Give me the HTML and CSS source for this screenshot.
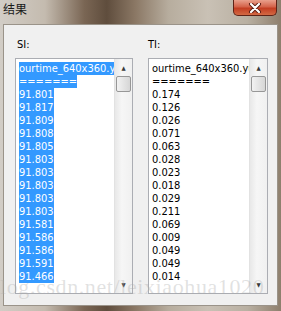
FILE: index.html
```html
<!DOCTYPE html>
<html lang="zh-CN">
<head>
    <meta charset="UTF-8">
    <title>结果</title>
    <link rel="stylesheet" href="styles.css">
</head>
<body>
    <div class="window">
        <div class="titlebar">
            <span class="title">结果</span>
            <button class="close-btn">
                <svg width="14" height="10" viewBox="0 0 14 10">
                    <path d="M3 1 L11 9 M11 1 L3 9" stroke="#5a1a10" stroke-width="4" stroke-linecap="round"/>
                    <path d="M3 1 L11 9 M11 1 L3 9" stroke="#ffffff" stroke-width="2.2" stroke-linecap="round"/>
                </svg>
            </button>
        </div>

        <div class="client">
            <div class="column">
                <div class="label">SI:</div>
                <div class="listbox">
                    <div class="lines selected">
                        <div class="line"><span>ourtime_640x360.yuv</span></div>
                        <div class="line"><span>=======</span></div>
                        <div class="line"><span>91.801</span></div>
                        <div class="line"><span>91.817</span></div>
                        <div class="line"><span>91.809</span></div>
                        <div class="line"><span>91.808</span></div>
                        <div class="line"><span>91.805</span></div>
                        <div class="line"><span>91.803</span></div>
                        <div class="line"><span>91.803</span></div>
                        <div class="line"><span>91.803</span></div>
                        <div class="line"><span>91.803</span></div>
                        <div class="line"><span>91.803</span></div>
                        <div class="line"><span>91.581</span></div>
                        <div class="line"><span>91.586</span></div>
                        <div class="line"><span>91.586</span></div>
                        <div class="line"><span>91.591</span></div>
                        <div class="line"><span>91.466</span></div>
                    </div>
                    <div class="scrollbar">
                        <div class="arrow">▲</div>
                        <div class="thumb"></div>
                        <div class="track"></div>
                        <div class="arrow">▼</div>
                    </div>
                </div>
            </div>

            <div class="column">
                <div class="label">TI:</div>
                <div class="listbox">
                    <div class="lines">
                        <div class="line"><span>ourtime_640x360.yuv</span></div>
                        <div class="line"><span>=======</span></div>
                        <div class="line"><span>0.174</span></div>
                        <div class="line"><span>0.126</span></div>
                        <div class="line"><span>0.026</span></div>
                        <div class="line"><span>0.071</span></div>
                        <div class="line"><span>0.063</span></div>
                        <div class="line"><span>0.028</span></div>
                        <div class="line"><span>0.023</span></div>
                        <div class="line"><span>0.018</span></div>
                        <div class="line"><span>0.029</span></div>
                        <div class="line"><span>0.211</span></div>
                        <div class="line"><span>0.069</span></div>
                        <div class="line"><span>0.009</span></div>
                        <div class="line"><span>0.049</span></div>
                        <div class="line"><span>0.049</span></div>
                        <div class="line"><span>0.014</span></div>
                    </div>
                    <div class="scrollbar">
                        <div class="arrow">▲</div>
                        <div class="thumb"></div>
                        <div class="track"></div>
                        <div class="arrow">▼</div>
                    </div>
                </div>
            </div>
        </div>

        <div class="watermark">log.csdn.net/leixiaohua1020</div>
    </div>
</body>
</html>
```

FILE: styles.css
```css
body {
    margin: 0;
    padding: 0;
    width: 281px;
    height: 311px;
    overflow: hidden;
    font-family: 'DejaVu Sans Condensed', 'DejaVu Sans', 'Noto Sans CJK SC', sans-serif;
    font-size: 11px;
    color: #000;
}

.window {
    position: relative;
    width: 281px;
    height: 311px;
    box-sizing: border-box;
    padding: 0 3px 5px 3px;
    display: flex;
    flex-direction: column;
    background: linear-gradient(90deg, #d2cdc6 0%, #c4bbaf 16%, #7a6654 30%, #5f4d3d 38%, #8a7764 48%, #b7ad9e 60%, #c9c1b5 74%, #b9b0a2 88%, #8e7f6d 100%);
}

.titlebar {
    height: 24px;
    flex-shrink: 0;
    display: flex;
    justify-content: space-between;
    align-items: flex-start;
}

.title {
    font-family: 'Noto Sans CJK SC', sans-serif;
    font-size: 12px;
    line-height: 16px;
    margin-top: 1px;
    color: #1a1a1a;
}

.close-btn {
    width: 44px;
    height: 16px;
    margin-right: 1px;
    padding: 0;
    border: 1px solid #5e2317;
    border-top: none;
    border-radius: 0 0 5px 5px;
    background: linear-gradient(#e9a08c 0%, #d4634a 45%, #c33e22 55%, #d36a44 100%);
    display: flex;
    align-items: center;
    justify-content: center;
}

.client {
    flex: 1;
    background: #f0f0f0;
    border: 1px solid #9a9389;
    display: flex;
    gap: 15px;
    padding: 13px 0 0 11px;
}

.column {
    display: flex;
    flex-direction: column;
}

.label {
    line-height: 13px;
    height: 13px;
    margin-bottom: 7px;
    padding-left: 2px;
}

.column + .column .label {
    padding-left: 0;
}

.listbox {
    width: 118px;
    height: 236px;
    box-sizing: border-box;
    border: 1px solid #abadb3;
    background: #fff;
    display: flex;
}

.column + .column .listbox {
    width: 120px;
}

.lines {
    flex: 1;
    overflow: hidden;
    padding: 3px 0 0 3px;
    white-space: nowrap;
}

.line {
    height: 13px;
    line-height: 13px;
}

.line span {
    display: inline-block;
    height: 13px;
}

.selected .line span {
    background: #3399ff;
    color: #fff;
}

.scrollbar {
    width: 17px;
    flex-shrink: 0;
    display: flex;
    flex-direction: column;
    background: linear-gradient(90deg, #e8e8e8, #f6f6f6 40%, #f0f0f0);
    border-left: 1px solid #e2e2e2;
}

.arrow {
    height: 17px;
    font-size: 6px;
    line-height: 17px;
    text-align: center;
    color: #3a3a3a;
}

.thumb {
    height: 14px;
    margin: 0 1px;
    border: 1px solid #979797;
    border-radius: 2px;
    background: linear-gradient(90deg, #f2f2f2, #e4e4e4 50%, #d6d6d6);
}

.track {
    flex: 1;
}

.watermark {
    position: absolute;
    left: 0;
    top: 274px;
    font-family: 'Liberation Serif', serif;
    font-size: 22px;
    letter-spacing: 0.6px;
    color: rgba(170, 170, 170, 0.35);
    white-space: nowrap;
}
```
